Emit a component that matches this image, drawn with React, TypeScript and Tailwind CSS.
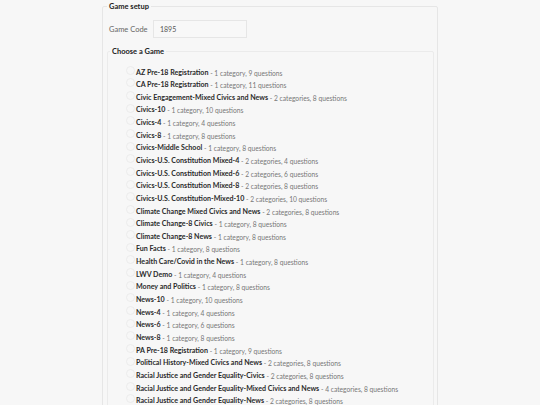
import React from 'react'

const games = [
  { name: 'AZ Pre-18 Registration', info: '1 category, 9 questions' },
  { name: 'CA Pre-18 Registration', info: '1 category, 11 questions' },
  { name: 'Civic Engagement-Mixed Civics and News', info: '2 categories, 8 questions' },
  { name: 'Civics-10', info: '1 category, 10 questions' },
  { name: 'Civics-4', info: '1 category, 4 questions' },
  { name: 'Civics-8', info: '1 category, 8 questions' },
  { name: 'Civics-Middle School', info: '1 category, 8 questions' },
  { name: 'Civics-U.S. Constitution Mixed-4', info: '2 categories, 4 questions' },
  { name: 'Civics-U.S. Constitution Mixed-6', info: '2 categories, 6 questions' },
  { name: 'Civics-U.S. Constitution Mixed-8', info: '2 categories, 8 questions' },
  { name: 'Civics-U.S. Constitution-Mixed-10', info: '2 categories, 10 questions' },
  { name: 'Climate Change Mixed Civics and News', info: '2 categories, 8 questions' },
  { name: 'Climate Change-8 Civics', info: '1 category, 8 questions' },
  { name: 'Climate Change-8 News', info: '1 category, 8 questions' },
  { name: 'Fun Facts', info: '1 category, 8 questions' },
  { name: 'Health Care/Covid in the News', info: '1 category, 8 questions' },
  { name: 'LWV Demo', info: '1 category, 4 questions' },
  { name: 'Money and Politics', info: '1 category, 8 questions' },
  { name: 'News-10', info: '1 category, 10 questions' },
  { name: 'News-4', info: '1 category, 4 questions' },
  { name: 'News-6', info: '1 category, 6 questions' },
  { name: 'News-8', info: '1 category, 8 questions' },
  { name: 'PA Pre-18 Registration', info: '1 category, 9 questions' },
  { name: 'Political History-Mixed Civics and News', info: '2 categories, 8 questions' },
  { name: 'Racial Justice and Gender Equality-Civics', info: '2 categories, 8 questions' },
  { name: 'Racial Justice and Gender Equality-Mixed Civics and News', info: '4 categories, 8 questions' },
  { name: 'Racial Justice and Gender Equality-News', info: '2 categories, 8 questions' },
]

const App = () => {
  return (
    <main className="min-h-[405px] bg-[#f7f7f7] pt-[1px] text-[#333] font-['Lato',sans-serif] text-[7.5px]">
      <fieldset className="ml-[102px] w-[336px] border border-[#e6e6e6] rounded-[2px]">
        <legend className="ml-[4px] px-[2px] font-bold text-[#222] text-[7.5px]">Game setup</legend>

        <div className="pl-[4px] pr-[3px]">
          <div className="flex items-center mt-[8px] mb-[8px]">
            <label className="ml-[2px] w-[44px] text-[#666]">Game Code</label>
            <input
              className="w-[94px] h-[18px] border border-[#e6e6e6] bg-[#f8f8f8] px-[6px] text-[7px] text-[#555] outline-none"
              defaultValue="1895"
            />
          </div>

          <fieldset className="border border-[#ebebeb] rounded-[2px] pb-[10px]">
            <legend className="ml-[2px] px-[2px] font-bold text-[#222]">Choose a Game</legend>
            <div className="flex flex-col mt-[9px] pl-[18px]">
              {games.map((game, index) => (
                <label key={index} className="flex items-center h-[12.65px] leading-[12.65px] whitespace-nowrap">
                  <span className="w-[9px] h-[9px] rounded-full border border-[#ececec] bg-[#f7f7f7] mr-[1px] -mt-[5px] shrink-0" />
                  <span className="font-bold text-[#2a2a2a] text-[7.1px]">{game.name}</span>
                  <span className="text-[#777] text-[6.7px]">&nbsp;- {game.info}</span>
                </label>
              ))}
            </div>
          </fieldset>
        </div>
      </fieldset>
    </main>
  )
}

export default App
